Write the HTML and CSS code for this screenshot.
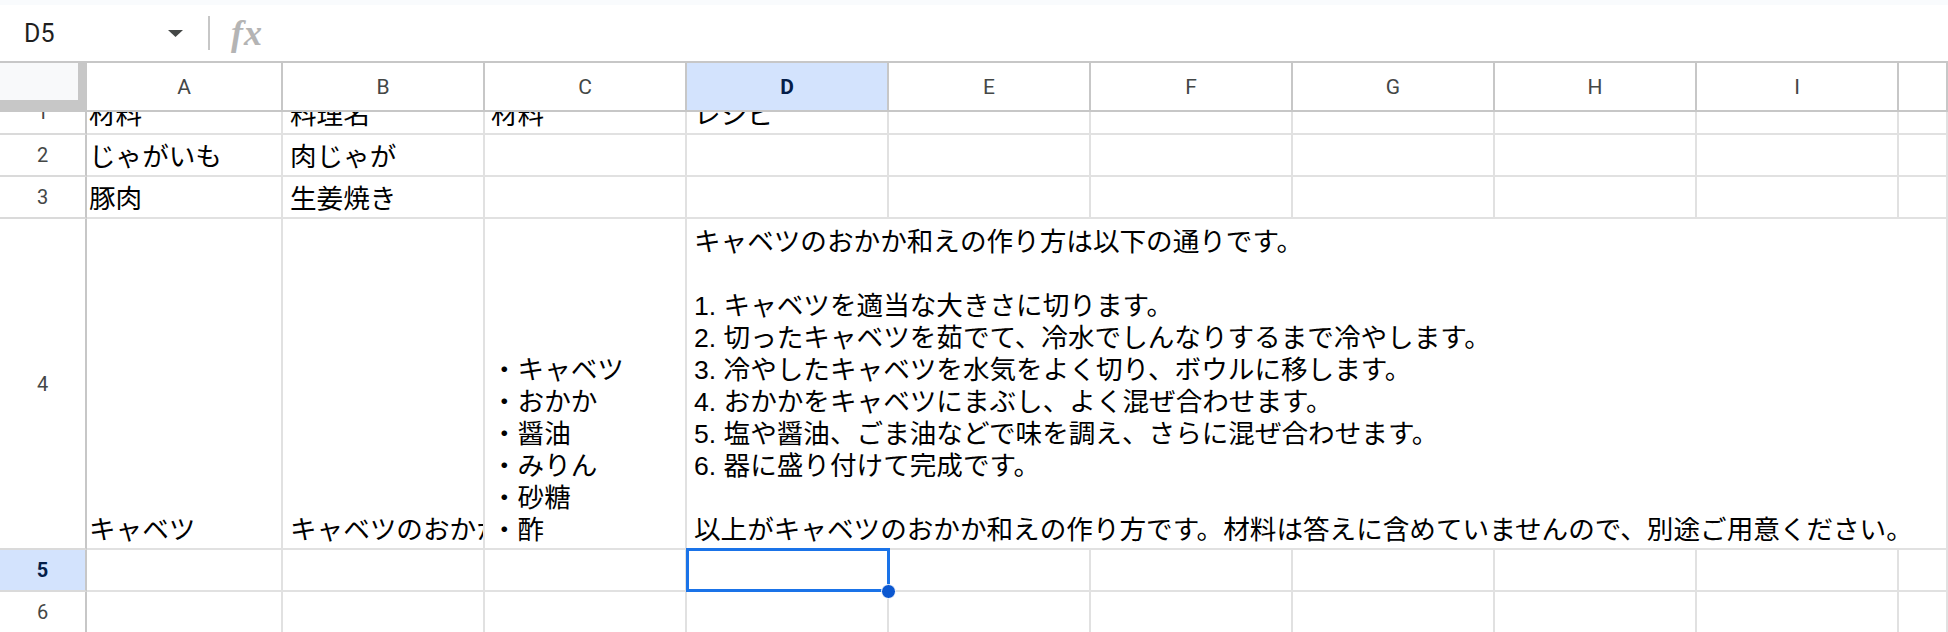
FILE: index.html
```html
<!DOCTYPE html>
<html lang="ja">
<head>
<meta charset="utf-8">
<title>Sheet</title>
<link rel="stylesheet" href="styles.css">
</head>
<body>
<div class="topstrip"></div>
<div class="fbar">
  <div class="namebox">
    <span class="ref">D5</span>
    <svg class="arrow" width="15" height="7" viewBox="0 0 15 7"><path d="M0 0 L15 0 L7.5 7 Z" fill="#444746"/></svg>
  </div>
  <div class="sep"></div>
  <div class="fx">fx</div>
</div>
<div class="sheet">
  <div class="grow colhead">
    <div class="corner"><div class="corner-in"></div></div>
    <div class="ch">A</div>
    <div class="ch">B</div>
    <div class="ch">C</div>
    <div class="ch sel">D</div>
    <div class="ch">E</div>
    <div class="ch">F</div>
    <div class="ch">G</div>
    <div class="ch">H</div>
    <div class="ch">I</div>
    <div class="ch"></div>
  </div>
  <div class="gridbody">
    <div class="rows">
      <div class="grow r1">
        <div class="rh">1</div>
        <div class="c pa">材料</div>
        <div class="c pb">料理名</div>
        <div class="c pc">材料</div>
        <div class="c pd">レシピ</div>
        <div class="c"></div><div class="c"></div><div class="c"></div><div class="c"></div><div class="c"></div><div class="c"></div>
      </div>
      <div class="grow r2">
        <div class="rh">2</div>
        <div class="c pa">じゃがいも</div>
        <div class="c pb">肉じゃが</div>
        <div class="c pc"></div>
        <div class="c pd"></div>
        <div class="c"></div><div class="c"></div><div class="c"></div><div class="c"></div><div class="c"></div><div class="c"></div>
      </div>
      <div class="grow r2">
        <div class="rh">3</div>
        <div class="c pa">豚肉</div>
        <div class="c pb">生姜焼き</div>
        <div class="c pc"></div>
        <div class="c pd"></div>
        <div class="c"></div><div class="c"></div><div class="c"></div><div class="c"></div><div class="c"></div><div class="c"></div>
      </div>
      <div class="grow r4">
        <div class="rh">4</div>
        <div class="c pa">キャベツ</div>
        <div class="c pb">キャベツのおかか和え</div>
        <div class="c pc">・キャベツ
・おかか
・醤油
・みりん
・砂糖
・酢</div>
        <div class="c pd span">キャベツのおかか和えの作り方は以下の通りです。

1. キャベツを適当な大きさに切ります。
2. 切ったキャベツを茹でて、冷水でしんなりするまで冷やします。
3. 冷やしたキャベツを水気をよく切り、ボウルに移します。
4. おかかをキャベツにまぶし、よく混ぜ合わせます。
5. 塩や醤油、ごま油などで味を調え、さらに混ぜ合わせます。
6. 器に盛り付けて完成です。

以上がキャベツのおかか和えの作り方です。材料は答えに含めていませんので、別途ご用意ください。</div>
      </div>
      <div class="grow r2">
        <div class="rh rsel">5</div>
        <div class="c pa"></div>
        <div class="c pb"></div>
        <div class="c pc"></div>
        <div class="c pd active"><div class="selbox"></div><div class="handle"></div></div>
        <div class="c"></div><div class="c"></div><div class="c"></div><div class="c"></div><div class="c"></div><div class="c"></div>
      </div>
      <div class="grow r2">
        <div class="rh">6</div>
        <div class="c pa"></div>
        <div class="c pb"></div>
        <div class="c pc"></div>
        <div class="c pd"></div>
        <div class="c"></div><div class="c"></div><div class="c"></div><div class="c"></div><div class="c"></div><div class="c"></div>
      </div>
    </div>
  </div>
</div>
</body>
</html>
```

FILE: styles.css
```css
* { box-sizing: border-box; }
html, body { margin: 0; padding: 0; }
body {
  width: 1948px;
  height: 632px;
  overflow: hidden;
  background: #ffffff;
  font-family: Roboto, "Liberation Sans", sans-serif;
}
.topstrip { height: 5px; background: #f9fbfd; }
.fbar {
  height: 58px;
  display: flex;
  align-items: center;
  border-bottom: 2px solid #c7c7c7;
  background: #ffffff;
}
.namebox {
  width: 208px;
  display: flex;
  align-items: center;
  justify-content: space-between;
  padding: 0 25px 0 24px;
}
.ref { font-size: 25px; color: #1f1f1f; }
.arrow { display: block; }
.sep { width: 2px; height: 34px; background: #c7c7c7; }
.fx {
  margin-left: 21px;
  font-family: "Liberation Serif", serif;
  font-style: italic;
  font-weight: bold;
  font-size: 36px;
  color: #b4b4b4;
  line-height: 1;
  letter-spacing: 1px;
}
.grow {
  display: grid;
  grid-template-columns: 87px 196px 202px 202px 202px 202px 202px 202px 202px 202px 1fr;
}
.colhead { height: 49px; }
.corner { background: #c7c7c7; }
.corner-in { width: 78px; height: 37px; background: #f8f9fa; }
.ch {
  display: flex;
  align-items: center;
  justify-content: center;
  border-right: 2px solid #c7c7c7;
  border-bottom: 2px solid #c7c7c7;
  font-size: 21px;
  color: #444746;
  background: #ffffff;
}
.ch.sel { background: #d3e3fd; color: #041e49; font-weight: bold; }
.gridbody { height: 520px; overflow: hidden; }
.rows { margin-top: -21px; }
.r1 { height: 44px; }
.r2 { height: 42px; }
.r4 { height: 331px; }
.rh {
  display: flex;
  align-items: center;
  justify-content: center;
  border-right: 2px solid #c7c7c7;
  border-bottom: 2px solid #dadada;
  font-size: 20px;
  color: #444746;
  background: #ffffff;
}
.rh.rsel { background: #d3e3fd; color: #041e49; font-weight: bold; }
.c {
  display: flex;
  align-items: flex-end;
  overflow: hidden;
  white-space: pre;
  border-right: 2px solid #e1e1e1;
  border-bottom: 2px solid #e1e1e1;
  font-family: "Liberation Sans", "Noto Sans CJK JP", sans-serif;
  font-size: 26.6px;
  line-height: 32px;
  color: #000000;
  padding: 0 0 2px 2px;
}
.pa { padding-left: 2px; }
.pb { padding-left: 7px; }
.pc { padding-left: 6px; }
.pd { padding-left: 7px; }
.span { grid-column: 5 / -1; overflow: visible; }
.active { position: relative; overflow: visible; }
.selbox {
  position: absolute;
  left: -1px;
  top: -2px;
  width: 204px;
  height: 44px;
  border: 3px solid #1a73e8;
  z-index: 2;
}
.handle {
  position: absolute;
  left: 194px;
  top: 34px;
  width: 15px;
  height: 15px;
  border-radius: 50%;
  background: #0b57d0;
  border: 1px solid #ffffff;
  z-index: 3;
}
```
